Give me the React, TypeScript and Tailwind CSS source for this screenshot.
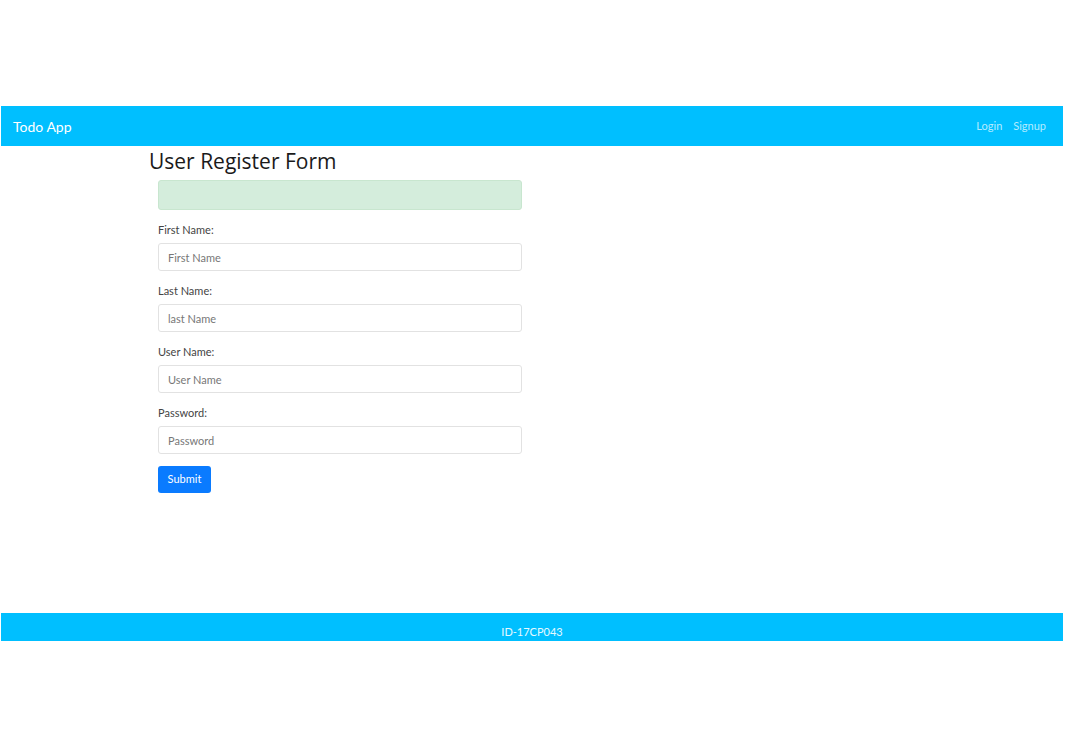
export default function App() {
  const fields = [
    { label: "First Name:", placeholder: "First Name" },
    { label: "Last Name:", placeholder: "last Name" },
    { label: "User Name:", placeholder: "User Name" },
    { label: "Password:", placeholder: "Password" },
  ];

  return (
    <div className="min-h-[740px] bg-white font-['Lato','Open_Sans',sans-serif] pt-[106px]">
      <nav className="ml-[1px] w-[1062px] h-[40px] bg-[#00bfff] flex items-center justify-between pl-[12px] pr-[17px]">
        <span className="text-white text-[14px]">Todo App</span>
        <div className="flex gap-[11px] text-[11px] text-[#b3ecff]">
          <span>Login</span>
          <span>Signup</span>
        </div>
      </nav>

      <div className="h-[464px]">
        <h1 className="ml-[149px] mt-[3px] text-[21px] leading-[24px] font-medium text-[#1a1a1a] font-['Open_Sans',sans-serif]">
          User Register Form
        </h1>
        <div className="ml-[158px] w-[364px]">
          <div className="mt-[7px] h-[30px] rounded-[3px] bg-[#d4eddc] border border-[#c8e6cf]" />
          {fields.map((f, i) => (
            <div key={i} className="mt-[13px]">
              <label className="block text-[11px] leading-[14px] text-[#444]">{f.label}</label>
              <input
                placeholder={f.placeholder}
                className="mt-[6px] w-full h-[28px] border border-[#e2e2e2] rounded-[3px] px-[9px] text-[11px] placeholder:text-[#777] outline-none"
              />
            </div>
          ))}
          <button className="mt-[12px] w-[53px] h-[27px] rounded-[3px] bg-[#0a7bff] text-white text-[11px]">
            Submit
          </button>
        </div>
      </div>

      <footer className="ml-[1px] w-[1062px] h-[28px] bg-[#00bfff] flex items-end justify-center pb-[1px]">
        <span className="text-[11px] text-[#e6f9ff]">ID-17CP043</span>
      </footer>
    </div>
  );
}
